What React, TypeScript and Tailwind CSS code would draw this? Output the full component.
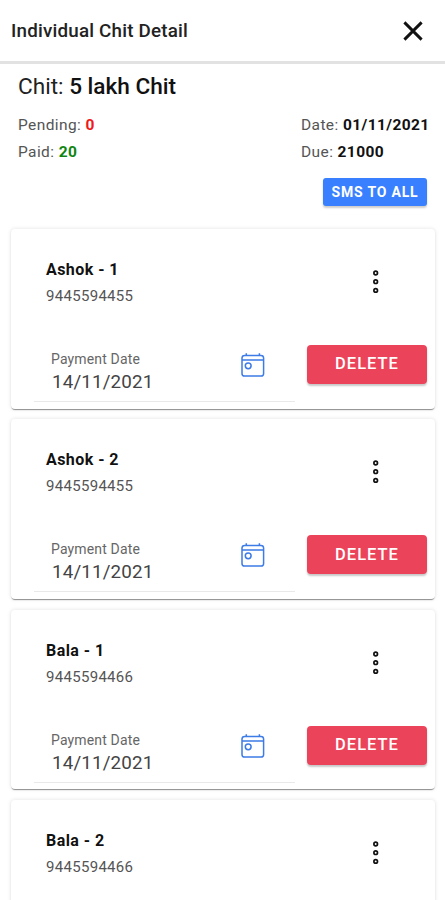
const payments = [
  { name: "Ashok - 1", phone: "9445594455", date: "14/11/2021" },
  { name: "Ashok - 2", phone: "9445594455", date: "14/11/2021" },
  { name: "Bala - 1", phone: "9445594466", date: "14/11/2021" },
  { name: "Bala - 2", phone: "9445594466", date: "14/11/2021" },
];

type Payment = (typeof payments)[number];

function CloseIcon() {
  return (
    <svg className="h-[20px] w-[20px]" viewBox="0 0 20 20" fill="none" stroke="#111" strokeWidth="2.9">
      <path d="M1.4 1.4 18.6 18.6M18.6 1.4 1.4 18.6" />
    </svg>
  );
}

function MoreIcon() {
  return (
    <svg className="h-[26px] w-[8px]" viewBox="0 0 8 26" fill="none" stroke="#111" strokeWidth="1.7">
      <circle cx="3.7" cy="4" r="1.8" />
      <circle cx="3.7" cy="12.7" r="1.8" />
      <circle cx="3.7" cy="21.4" r="1.8" />
    </svg>
  );
}

function CalendarIcon() {
  return (
    <svg className="h-[26px] w-[26px]" viewBox="0 0 26 26" fill="none" stroke="#3d7be6" strokeWidth="1.5">
      <rect x="2" y="3.5" width="21.6" height="20.6" rx="2.6" />
      <path d="M2 8h21.6M6.3 1.2v2.3M19.4 1.2v2.3" />
      <circle cx="8.2" cy="13.8" r="2.9" />
    </svg>
  );
}

function PaymentCard({ payment }: { payment: Payment }) {
  return (
    <article className="h-[179.5px] shrink-0 rounded bg-white pl-[23px] pr-2 pt-[29px] shadow-[0_2px_1px_-1px_rgba(0,0,0,0.32),0_1px_1px_rgba(0,0,0,0.14),0_0_4px_rgba(0,0,0,0.12)]">
      <div className="flex justify-between pl-3 pr-[47px]">
        <div>
          <h2 className="text-[16px] leading-[24px] font-bold tracking-[0.45px] text-[#111]">{payment.name}</h2>
          <p className="mt-[2px] text-[15px] leading-[24px] tracking-[0.3px] text-[#555]">{payment.phone}</p>
        </div>
        <div className="pt-[11px]">
          <MoreIcon />
        </div>
      </div>
      <div className="mt-[37px] flex items-start justify-between">
        <div className="flex h-[57px] w-[261px] justify-between border-b border-[#e9e9e9] pl-[17px] pr-[29px]">
          <div className="pt-[5px]">
            <p className="text-[14px] leading-[18px] tracking-[0.15px] text-[#666]">Payment Date</p>
            <p className="pl-[1px] text-[18.8px] leading-[28px] tracking-[0.15px] text-[#444]">{payment.date}</p>
          </div>
          <div className="pt-[7px]">
            <CalendarIcon />
          </div>
        </div>
        <button className="h-[39px] w-[120px] rounded bg-[#eb445a] text-[16.5px] font-medium tracking-[1px] text-white shadow-[0_2px_2px_rgba(0,0,0,0.22)]">
          DELETE
        </button>
      </div>
    </article>
  );
}

export default function App() {
  return (
    <div className="flex h-[900px] w-[445px] flex-col overflow-hidden bg-white font-['Roboto',sans-serif]">
      <header className="flex h-[64px] shrink-0 items-center justify-between border-b-[3px] border-[#e2e2e2] pl-[11px] pr-[22px]">
        <h1 className="pt-[2px] text-[18.8px] font-medium tracking-[0.2px] text-[#222]">Individual Chit Detail</h1>
        <button aria-label="Close">
          <CloseIcon />
        </button>
      </header>
      <section className="h-[165px] shrink-0 pl-[18px] pr-[18px] pt-[8px]">
        <h2 className="text-[22.6px] leading-[30px] text-[#222]">
          Chit: <span className="font-medium text-[#111]">5 lakh Chit</span>
        </h2>
        <div className="mt-[10px] flex justify-between text-[15.5px] leading-[26.5px] tracking-[0.4px] text-[#555]">
          <div>
            <p>
              Pending: <span className="font-bold text-[#f01818]">0</span>
            </p>
            <p>
              Paid: <span className="font-bold text-[#108510]">20</span>
            </p>
          </div>
          <div className="w-[126px] whitespace-nowrap">
            <p>
              Date: <span className="font-bold text-[#111]">01/11/2021</span>
            </p>
            <p>
              Due: <span className="font-bold text-[#111]">21000</span>
            </p>
          </div>
        </div>
        <div className="mt-[13px] flex justify-end">
          <button className="h-[28px] w-[104px] rounded-[3px] bg-[#3880ff] text-[14px] font-bold tracking-[0.8px] text-white shadow-[0_2px_2px_rgba(0,0,0,0.2)]">
            SMS TO ALL
          </button>
        </div>
      </section>
      <main className="flex flex-col gap-[10.9px] pl-[11px] pr-[10px]">
        {payments.map((payment) => (
          <PaymentCard key={payment.name} payment={payment} />
        ))}
      </main>
    </div>
  );
}
